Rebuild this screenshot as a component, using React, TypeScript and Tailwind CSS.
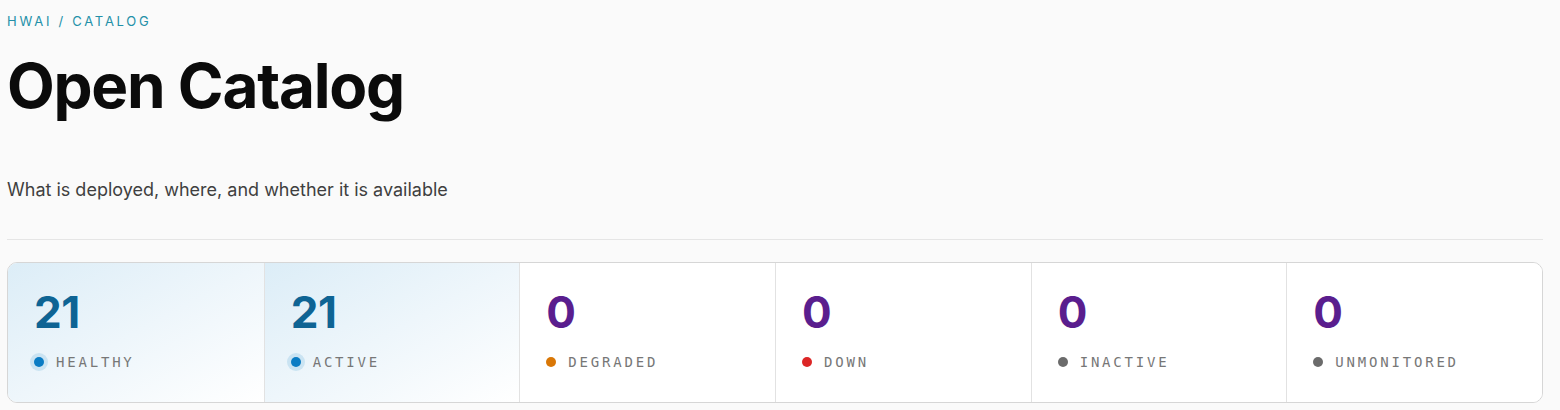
import React from 'react';

// --- Data ---
type Stat = {
  label: string;
  value: number;
  tone: 'good' | 'warn' | 'bad' | 'muted';
};

const stats: Stat[] = [
  { label: 'Healthy', value: 21, tone: 'good' },
  { label: 'Active', value: 21, tone: 'good' },
  { label: 'Degraded', value: 0, tone: 'warn' },
  { label: 'Down', value: 0, tone: 'bad' },
  { label: 'Inactive', value: 0, tone: 'muted' },
  { label: 'Unmonitored', value: 0, tone: 'muted' },
];

const dotClass: Record<Stat['tone'], string> = {
  good: 'bg-[#0a7cc4] shadow-[0_0_0_4px_rgba(10,124,196,0.14)]',
  warn: 'bg-[#d97706]',
  bad: 'bg-[#dc2626]',
  muted: 'bg-[#6b6b6b]',
};

// --- Helper Components ---
const StatCard: React.FC<{ stat: Stat; first: boolean }> = ({ stat, first }) => {
  const good = stat.tone === 'good';
  return (
    <div
      className={
        'h-[139px] px-[26px] pt-[27px] ' +
        (first ? '' : 'border-l border-[#e2e2e2] ') +
        (good ? 'bg-gradient-to-br from-[#dcedf7] via-[#eef6fb] to-[#ffffff]' : 'bg-white')
      }
    >
      <div
        className={
          'text-[44px] font-bold leading-none tracking-[-0.01em] ' +
          (good ? 'text-[#0e6494]' : 'text-[#5a1e8e]')
        }
      >
        {stat.value}
      </div>
      <div className="mt-[18px] flex items-center gap-3">
        <span className={'w-[10px] h-[10px] rounded-full ' + dotClass[stat.tone]} />
        <span className="font-['DejaVu_Sans_Mono',monospace] text-[14px] leading-5 uppercase tracking-[0.2em] text-[#777777]">
          {stat.label}
        </span>
      </div>
    </div>
  );
};

// --- Main Component ---
export default function App() {
  return (
    <div className="min-h-screen bg-[#fafafa] font-['Inter',sans-serif] pl-[7px] pr-[17px] pt-[13px]">
      {/* -- Header -- */}
      <p className="text-[13px] leading-4 tracking-[0.21em] text-[#2390a8]">HWAI / CATALOG</p>
      <h1 className="mt-[26px] text-[62px] font-bold leading-none tracking-[-0.02em] text-[#0b0b0b]">
        Open Catalog
      </h1>
      <p className="mt-[61px] text-[18px] leading-6 text-[#3f3f3f]">
        What is deployed, where, and whether it is available
      </p>

      <div className="mt-[37px] border-t border-[#e5e5e5]" />

      {/* -- Stats -- */}
      <div className="mt-[22px] grid grid-cols-6 overflow-hidden rounded-[10px] border border-[#d6d6d6] bg-white">
        {stats.map((s, i) => (
          <StatCard key={s.label} stat={s} first={i === 0} />
        ))}
      </div>
    </div>
  );
}
